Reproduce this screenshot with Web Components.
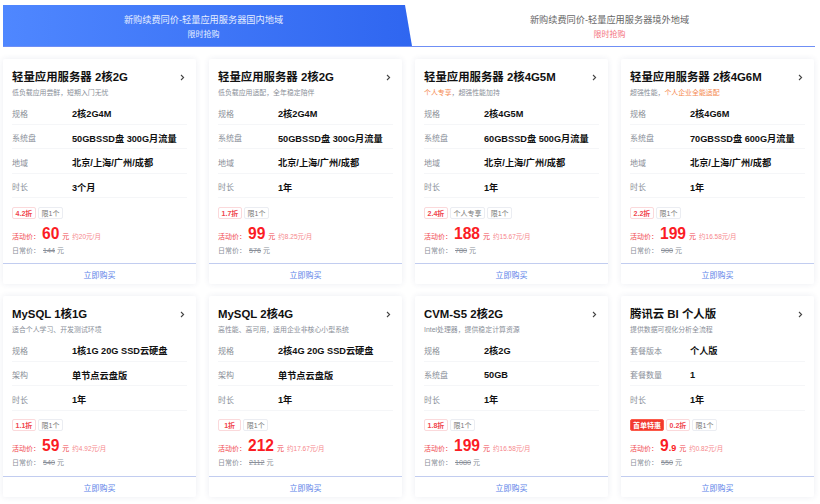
<!DOCTYPE html>
<html lang="zh">
<head>
<meta charset="utf-8">
<title>新购续费同价</title>
<style>
html, body { margin: 0; background: #fff; overflow: hidden; }
body { font-family: "Liberation Sans", "Noto Sans CJK SC", sans-serif; width: 820px; height: 504px; }
</style>
</head>
<body>
<promo-page></promo-page>
<script>
const PRODUCTS = [
  { title: '轻量应用服务器 2核2G', sub: '低负载应用尝鲜，短期入门无忧',
    rows: [['规格', '2核2G4M'], ['系统盘', '50GBSSD盘 300G月流量'], ['地域', '北京/上海/广州/成都'], ['时长', '3个月']],
    tags: ['4.2折', '限1个'], price: '60', month: '约20元/月', old: '144' },
  { title: '轻量应用服务器 2核2G', sub: '低负载应用适配，全年稳定陪伴',
    rows: [['规格', '2核2G4M'], ['系统盘', '50GBSSD盘 300G月流量'], ['地域', '北京/上海/广州/成都'], ['时长', '1年']],
    tags: ['1.7折', '限1个'], price: '99', month: '约8.25元/月', old: '576' },
  { title: '轻量应用服务器 2核4G5M', sub: '<em>个人专享</em>，超强性能加持',
    rows: [['规格', '2核4G5M'], ['系统盘', '60GBSSD盘 500G月流量'], ['地域', '北京/上海/广州/成都'], ['时长', '1年']],
    tags: ['2.4折', '个人专享', '限1个'], price: '188', month: '约15.67元/月', old: '780' },
  { title: '轻量应用服务器 2核4G6M', sub: '超强性能，<em>个人企业全能适配</em>',
    rows: [['规格', '2核4G6M'], ['系统盘', '70GBSSD盘 600G月流量'], ['地域', '北京/上海/广州/成都'], ['时长', '1年']],
    tags: ['2.2折', '限1个'], price: '199', month: '约16.58元/月', old: '900' },
  { title: 'MySQL 1核1G', sub: '适合个人学习、开发测试环境',
    rows: [['规格', '1核1G 20G SSD云硬盘'], ['架构', '单节点云盘版'], ['时长', '1年']],
    tags: ['1.1折', '限1个'], price: '59', month: '约4.92元/月', old: '540' },
  { title: 'MySQL 2核4G', sub: '高性能、高可用，适用企业非核心小型系统',
    rows: [['规格', '2核4G 20G SSD云硬盘'], ['架构', '单节点云盘版'], ['时长', '1年']],
    tags: ['1折', '限1个'], price: '212', month: '约17.67元/月', old: '2112' },
  { title: 'CVM-S5 2核2G', sub: 'Intel处理器，提供稳定计算资源',
    rows: [['规格', '2核2G'], ['系统盘', '50GB'], ['时长', '1年']],
    tags: ['1.8折', '限1个'], price: '199', month: '约16.58元/月', old: '1080' },
  { title: '腾讯云 BI 个人版', sub: '提供数据可视化分析全流程',
    rows: [['套餐版本', '个人版'], ['套餐数量', '1'], ['时长', '1年']],
    special: '首单特惠', tags: ['0.2折', '限1个'], price: '9', cents: '.9', month: '约0.82元/月', old: '550' }
];

class TabBar extends HTMLElement {
  constructor() {
    super();
    this.attachShadow({ mode: 'open' });
    this.shadowRoot.innerHTML = `
      <style>
        :host { display: flex; height: 41px; border-bottom: 1px solid #6f8ff5; box-sizing: content-box; }
        .tab { flex: 1; display: flex; flex-direction: column; align-items: center; padding: 8px 8px 0 0; box-sizing: border-box; }
        .tab b { font-weight: 400; font-size: 9.2px; line-height: 14px; }
        .tab span { font-size: 8px; line-height: 12px; margin-top: 2px; }
        .on { flex: 0 0 409px; color: #fff; background: linear-gradient(90deg, #4f87ff, #2f66f0);
              clip-path: polygon(0 0, 402px 0, 409px 100%, 0 100%); }
        .on b, .on span { color: #e6eeff; }
        .off b { color: #666; }
        .off span { color: #f4747c; }
      </style>
      <div class="tab on"><b>新购续费同价-轻量应用服务器国内地域</b><span>限时抢购</span></div>
      <div class="tab off"><b>新购续费同价-轻量应用服务器境外地域</b><span>限时抢购</span></div>`;
  }
}

class SpecRow extends HTMLElement {
  constructor() {
    super();
    this.attachShadow({ mode: 'open' });
    this.shadowRoot.innerHTML = `
      <style>
        :host { display: flex; align-items: center; height: 24.5px; padding-top: 2.5px; border-bottom: 1px solid #f5f6f8; box-sizing: border-box;
                font-size: 8px; color: #8a8f99; }
        .k { width: 60px; flex: none; }
        .v { color: #111; font-weight: 700; font-size: 9.2px; white-space: nowrap; }
      </style>
      <div class="k"><slot name="label"></slot></div>
      <div class="v"><slot></slot></div>`;
  }
}

class PriceTag extends HTMLElement {
  constructor() {
    super();
    this.attachShadow({ mode: 'open' });
    this.shadowRoot.innerHTML = `
      <style>
        :host { display: inline-flex; align-items: center; justify-content: center; height: 10px; padding: 0 2.6px; min-width: 15px;
                border: 1px solid #ebedf2; border-radius: 2px; font-size: 7px; color: #777; white-space: nowrap; }
        :host([kind="off"]) { border-color: #fbd9db; color: #f0444c; font-weight: 700; min-width: 16px; }
        :host([kind="hot"]) { border-color: #fc5a4a; background: #f23a2f; color: #fff; font-weight: 700; padding: 0 2px; }
      </style>
      <slot></slot>`;
  }
}

class ProductCard extends HTMLElement {
  constructor() {
    super();
    this.attachShadow({ mode: 'open' });
    this.shadowRoot.innerHTML = `
      <style>
        :host { display: flex; flex-direction: column; background: #fff; border-radius: 2px;
                box-shadow: 0 0 6px rgba(40, 60, 110, .09); min-width: 0; }
        .body { flex: 1; padding: 11px 9px 0; }
        .head { display: flex; justify-content: space-between; align-items: center; height: 14px; }
        .head h3 { margin: 0; font-size: 11.4px; line-height: 14px; font-weight: 700; color: #111; white-space: nowrap; }
        .head svg { width: 5px; height: 7px; margin-right: 2px; }
        .sub { font-size: 6.9px; line-height: 10px; color: #8a8f99; margin: 3.5px 0 2.7px; white-space: nowrap; height: 10px; }
        em { font-style: normal; color: #f5894f; }
        .tags { display: flex; gap: 2px; margin-top: 8.5px; height: 12px; }
        .now { display: flex; align-items: baseline; margin-top: 5px; height: 19px; color: #f0444c; font-size: 7px; white-space: nowrap; }
        .now strong { font-size: 15.6px; color: #fb1c24; margin: 0 3px 0 2px; line-height: 19px; }
        .now strong small { font-size: 9px; }
        .now i { font-style: normal; margin-right: 3px; }
        .now .m { color: #f6868b; font-size: 6.5px; }
        .was { font-size: 7px; line-height: 10px; color: #8a8f99; margin-top: 3px; white-space: nowrap; }
        .was s { margin: 0 2px 0 3px; font-size: 7.2px; }
        .buy { height: 21px; flex: none; border-top: 1px solid #c2cdf0; display: flex; align-items: center; justify-content: center;
               color: #5b7fe8; font-size: 8px; box-sizing: border-box; }
      </style>
      <div class="body">
        <div class="head">
          <h3 id="title"></h3>
          <svg viewBox="0 0 5 7"><path d="M1 1 3.6 3.5 1 6" fill="none" stroke="#444" stroke-width="1.1"/></svg>
        </div>
        <div class="sub" id="sub"></div>
        <div id="rows"></div>
        <div class="tags" id="tags"></div>
        <div class="now">活动价：<strong id="price"></strong><i>元</i><span class="m" id="month"></span></div>
        <div class="was">日常价：<s id="old"></s>元</div>
      </div>
      <div class="buy">立即购买</div>`;
  }

  set data(p) {
    const root = this.shadowRoot;
    root.getElementById('title').textContent = p.title;
    root.getElementById('sub').innerHTML = p.sub;
    root.getElementById('price').innerHTML = p.price + (p.cents ? `<small>${p.cents}</small>` : '');
    root.getElementById('month').textContent = p.month;
    root.getElementById('old').textContent = p.old;
    const rows = root.getElementById('rows');
    p.rows.forEach(([k, v]) => {
      const row = document.createElement('spec-row');
      const label = document.createElement('span');
      label.slot = 'label';
      label.textContent = k;
      row.append(label, v);
      rows.append(row);
    });
    const tags = root.getElementById('tags');
    if (p.special) tags.append(this.tag(p.special, 'hot'));
    p.tags.forEach((t, i) => tags.append(this.tag(t, i === 0 ? 'off' : '')));
  }

  tag(text, kind) {
    const t = document.createElement('price-tag');
    if (kind) t.setAttribute('kind', kind);
    t.textContent = text;
    return t;
  }
}

class PromoPage extends HTMLElement {
  constructor() {
    super();
    this.attachShadow({ mode: 'open' });
    this.shadowRoot.innerHTML = `
      <style>
        :host { display: block; padding: 5px 5px 0 3px; }
        .grid { display: grid; grid-template-columns: repeat(4, 193px); column-gap: 13px;
                grid-template-rows: 225px 201px; row-gap: 12px; margin-top: 12px; }
      </style>
      <tab-bar></tab-bar>
      <div class="grid" id="grid"></div>`;
    const grid = this.shadowRoot.getElementById('grid');
    PRODUCTS.forEach(p => {
      const card = document.createElement('product-card');
      card.data = p;
      grid.append(card);
    });
  }
}

customElements.define('tab-bar', TabBar);
customElements.define('spec-row', SpecRow);
customElements.define('price-tag', PriceTag);
customElements.define('product-card', ProductCard);
customElements.define('promo-page', PromoPage);
</script>
</body>
</html>
